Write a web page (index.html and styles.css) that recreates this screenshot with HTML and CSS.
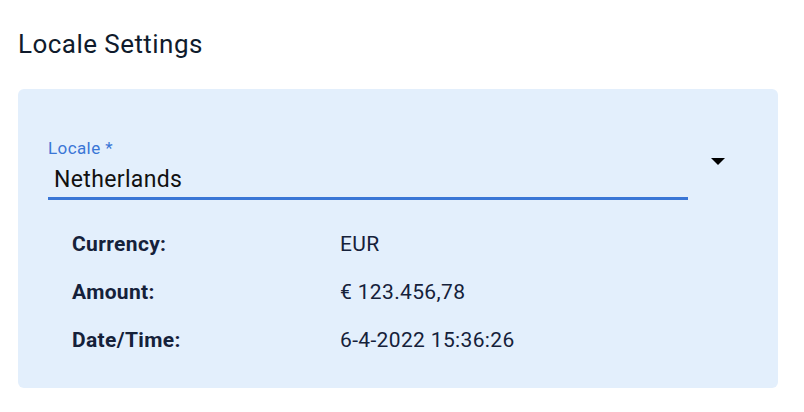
FILE: index.html
```html
<!DOCTYPE html>
<html>
<head>
<meta charset="utf-8">
<link rel="stylesheet" href="styles.css">
</head>
<body>
<h1 class="title">Locale Settings</h1>
<div class="card">
  <div class="select-row">
    <div class="field">
      <label class="field-label">Locale *</label>
      <div class="field-value">Netherlands</div>
    </div>
    <svg class="arrow" width="14" height="7" viewBox="0 0 14 7"><path d="M0 0 L14 0 L7 7 Z" fill="#000"/></svg>
  </div>
  <div class="info">
    <div class="k">Currency:</div><div class="v">EUR</div>
    <div class="k">Amount:</div><div class="v">€ 123.456,78</div>
    <div class="k">Date/Time:</div><div class="v">6-4-2022 15:36:26</div>
  </div>
</div>
</body>
</html>
```
FILE: styles.css
```css
html, body {
  margin: 0;
  padding: 0;
  background: #ffffff;
  font-family: Roboto, "Liberation Sans", sans-serif;
}
body {
  padding: 28px 26px 0 18px;
}
.title {
  margin: 0;
  font-size: 26px;
  line-height: 32px;
  font-weight: 400;
  letter-spacing: 0.45px;
  color: #0f1b2c;
}
.card {
  margin-top: 29px;
  background: #e3effc;
  border-radius: 6px;
  padding: 49px 30px 24px 30px;
}
.select-row {
  display: flex;
  align-items: flex-start;
}
.field {
  width: 640px;
  border-bottom: 3px solid #3a76d6;
  padding-bottom: 3px;
}
.field-label {
  display: block;
  font-size: 17px;
  line-height: 20px;
  letter-spacing: 0.4px;
  color: #3a76d6;
}
.field-value {
  margin-top: 8px;
  padding-left: 6px;
  font-size: 23px;
  line-height: 28px;
  letter-spacing: 0.35px;
  color: #111;
}
.arrow {
  margin-left: 23px;
  margin-top: 20px;
}
.info {
  display: grid;
  grid-template-columns: 268px 1fr;
  margin: 20px 0 0 24px;
  font-size: 21px;
  line-height: 48px;
  letter-spacing: 0.35px;
  color: #15213a;
}
.k {
  font-weight: 700;
}
.v {
  font-weight: 400;
}
```
